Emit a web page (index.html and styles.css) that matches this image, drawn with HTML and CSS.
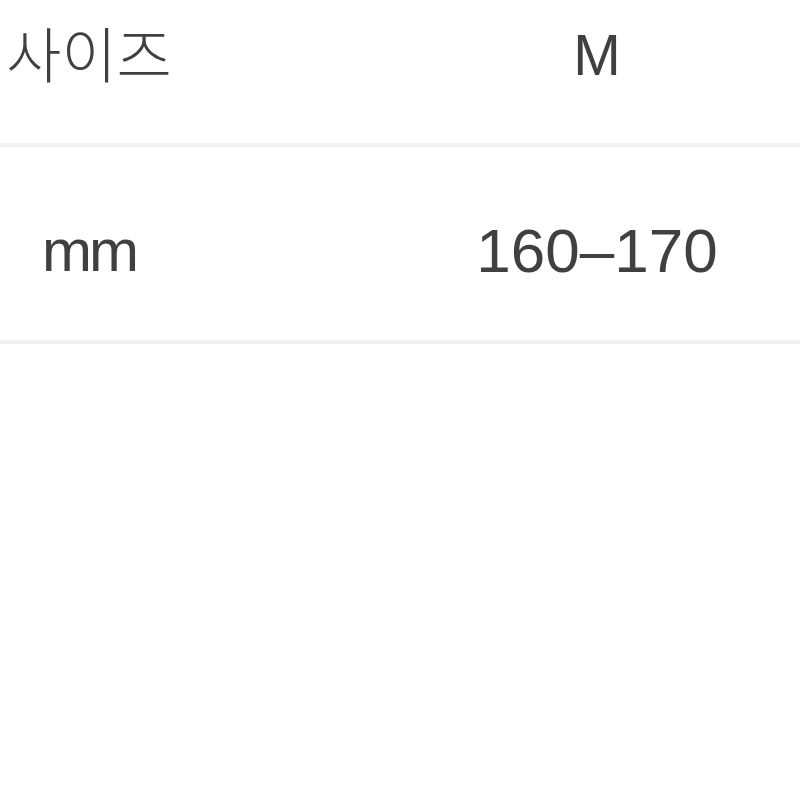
FILE: index.html
```html
<!DOCTYPE html>
<html lang="ko">
<head>
<meta charset="utf-8">
<title>사이즈</title>
<link rel="stylesheet" href="styles.css">
</head>
<body>
<div class="chart">
  <div class="row head">
    <div class="cell label">사이즈</div>
    <div class="cell"></div>
    <div class="cell value">M</div>
  </div>
  <div class="row body">
    <div class="cell label">mm</div>
    <div class="cell"></div>
    <div class="cell value">160–170</div>
  </div>
</div>
</body>
</html>
```
FILE: styles.css
```css
html, body {
  margin: 0;
  padding: 0;
  background: #ffffff;
}
.chart {
  width: 800px;
  font-family: "Liberation Sans", "Noto Sans CJK KR", sans-serif;
  color: #404040;
}
.row {
  display: grid;
  grid-template-columns: 178px 216px 406px;
  align-items: center;
  box-sizing: border-box;
  border-bottom: 4px solid #f0f0f0;
}
.head {
  height: 147px;
  padding-bottom: 33px;
}
.body {
  height: 197px;
  padding-top: 15px;
}
.cell {
  text-align: center;
  line-height: 1;
}
.head .label {
  font-family: "Noto Sans CJK KR", sans-serif;
  font-weight: 300;
  font-size: 60px;
  padding-bottom: 6px;
}
.head .value {
  font-size: 57px;
}
.body .label {
  font-size: 60px;
  letter-spacing: -3px;
}
.body .value {
  font-size: 62px;
}
```
